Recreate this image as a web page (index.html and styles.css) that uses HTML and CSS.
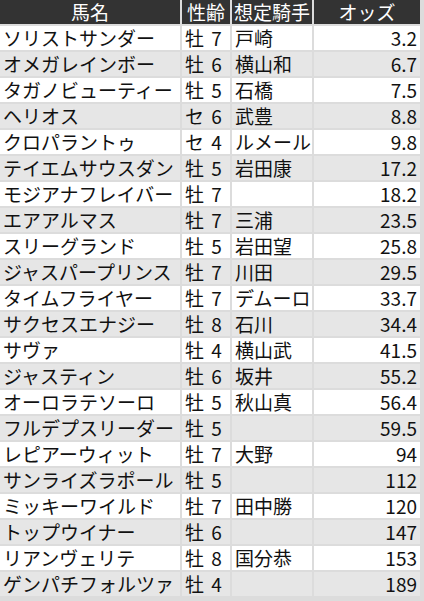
FILE: index.html
```html
<!DOCTYPE html>
<html lang="ja">
<head>
<meta charset="utf-8">
<link rel="stylesheet" href="styles.css">
</head>
<body>
<table class="odds">
<thead>
<tr><th class="c-name">馬名</th><th class="c-sex">性齢</th><th class="c-jockey">想定騎手</th><th class="c-odds">オッズ</th></tr>
</thead>
<tbody>
<tr><td>ソリストサンダー</td><td class="sex">牡 7</td><td>戸崎</td><td class="num">3.2</td></tr>
<tr><td>オメガレインボー</td><td class="sex">牡 6</td><td>横山和</td><td class="num">6.7</td></tr>
<tr><td>タガノビューティー</td><td class="sex">牡 5</td><td>石橋</td><td class="num">7.5</td></tr>
<tr><td>ヘリオス</td><td class="sex">セ 6</td><td>武豊</td><td class="num">8.8</td></tr>
<tr><td>クロパラントゥ</td><td class="sex">セ 4</td><td>ルメール</td><td class="num">9.8</td></tr>
<tr><td>テイエムサウスダン</td><td class="sex">牡 5</td><td>岩田康</td><td class="num">17.2</td></tr>
<tr><td>モジアナフレイバー</td><td class="sex">牡 7</td><td></td><td class="num">18.2</td></tr>
<tr><td>エアアルマス</td><td class="sex">牡 7</td><td>三浦</td><td class="num">23.5</td></tr>
<tr><td>スリーグランド</td><td class="sex">牡 5</td><td>岩田望</td><td class="num">25.8</td></tr>
<tr><td>ジャスパープリンス</td><td class="sex">牡 7</td><td>川田</td><td class="num">29.5</td></tr>
<tr><td>タイムフライヤー</td><td class="sex">牡 7</td><td>デムーロ</td><td class="num">33.7</td></tr>
<tr><td>サクセスエナジー</td><td class="sex">牡 8</td><td>石川</td><td class="num">34.4</td></tr>
<tr><td>サヴァ</td><td class="sex">牡 4</td><td>横山武</td><td class="num">41.5</td></tr>
<tr><td>ジャスティン</td><td class="sex">牡 6</td><td>坂井</td><td class="num">55.2</td></tr>
<tr><td>オーロラテソーロ</td><td class="sex">牡 5</td><td>秋山真</td><td class="num">56.4</td></tr>
<tr><td>フルデプスリーダー</td><td class="sex">牡 5</td><td></td><td class="num">59.5</td></tr>
<tr><td>レピアーウィット</td><td class="sex">牡 7</td><td>大野</td><td class="num">94</td></tr>
<tr><td>サンライズラポール</td><td class="sex">牡 5</td><td></td><td class="num">112</td></tr>
<tr><td>ミッキーワイルド</td><td class="sex">牡 7</td><td>田中勝</td><td class="num">120</td></tr>
<tr><td>トップウイナー</td><td class="sex">牡 6</td><td></td><td class="num">147</td></tr>
<tr><td>リアンヴェリテ</td><td class="sex">牡 8</td><td>国分恭</td><td class="num">153</td></tr>
<tr><td>ゲンパチフォルツァ</td><td class="sex">牡 4</td><td></td><td class="num">189</td></tr>
</tbody>
</table>
</body>
</html>
```
FILE: styles.css
```css
html, body {
  margin: 0;
  padding: 0;
  background: #dcdcdc;
}
body {
  font-family: "Noto Sans CJK JP", "Noto Sans", sans-serif;
  color: #111;
}
.odds {
  border-collapse: separate;
  border-spacing: 0;
  font-size: 19px;
  table-layout: fixed;
}
.odds th,
.odds td {
  height: 26px;
  line-height: 24px;
  padding: 0 0 0 3px;
  border-right: 2px solid #dcdcdc;
  border-bottom: 2px solid #dcdcdc;
  white-space: nowrap;
  box-sizing: border-box;
  font-weight: normal;
  vertical-align: middle;
}
.odds th {
  background: #333333;
  color: #ffffff;
  text-align: center;
  padding: 0;
}
.odds tbody tr:nth-child(odd) td { background: #ffffff; }
.odds tbody tr:nth-child(even) td { background: #e6e6e6; }
.c-name { width: 182px; }
.c-sex { width: 50px; }
.c-jockey { width: 82px; }
.c-odds { width: 108px; }
.odds td.sex {
  word-spacing: 3px;
}
.odds td.num {
  text-align: right;
  padding: 0 3px 0 0;
}
```
